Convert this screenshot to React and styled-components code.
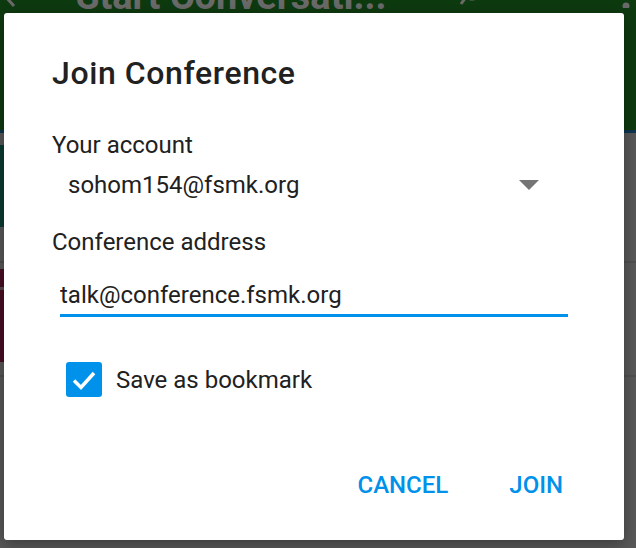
import React, { useState } from "react";
import styled, { createGlobalStyle } from "styled-components";

const GlobalStyle = createGlobalStyle`
  html, body {
    margin: 0;
    padding: 0;
    background: #595959;
    font-family: Roboto, "Noto Sans", sans-serif;
  }
  * { box-sizing: border-box; }
`;

const Screen = styled.div`
  position: relative;
  width: 636px;
  height: 548px;
  overflow: hidden;
  background: #595959;
`;

const Toolbar = styled.div`
  display: flow-root;
  height: 133px;
  background: #0e3a10;
  border-bottom: 3px solid #0c3550;
`;

const ToolbarRow = styled.div`
  display: flex;
  align-items: center;
  height: 40px;
  margin-top: -24px;
  padding: 0 6px 0 2px;
  color: #6a6a6a;
`;

const ToolbarTitle = styled.div`
  flex: 1;
  margin-left: 60px;
  font-size: 38px;
  font-weight: 700;
  line-height: 40px;
  white-space: nowrap;
`;

const ToolbarIcon = styled.svg`
  flex: none;
  margin-left: ${(p) => p.$gap || 0}px;
`;

const ListRow = styled.div`
  height: ${(p) => p.$h}px;
  padding-top: ${(p) => p.$pad}px;
  border-bottom: 2px solid #4f4f4f;
`;

const Avatar = styled.div`
  width: 80px;
  height: ${(p) => p.$h}px;
  background: ${(p) => p.$color};
  border-top: ${(p) => (p.$band ? "18px solid #4a0d25" : "none")};
  box-shadow: ${(p) => (p.$band ? "inset 0 3px 0 #5a4a50" : "none")};
`;

const Dialog = styled.div`
  position: absolute;
  left: 4px;
  top: 13px;
  width: 620px;
  height: 527px;
  background: #ffffff;
  border-radius: 3px;
  box-shadow: 0 4px 16px rgba(0, 0, 0, 0.35);
  padding: 40px 56px 0 48px;
  display: flex;
  flex-direction: column;
`;

const Title = styled.h2`
  margin: 0;
  font-size: 32px;
  font-weight: 500;
  line-height: 40px;
  letter-spacing: 0.6px;
  color: #212121;
`;

const Label = styled.div`
  margin-top: ${(p) => p.$top}px;
  font-size: 24px;
  line-height: 32px;
  color: #212121;
`;

const Select = styled.div`
  display: flex;
  align-items: center;
  justify-content: space-between;
  margin-top: 8px;
  padding: 0 29px 0 16px;
  font-size: 24px;
  line-height: 32px;
  color: #212121;
`;

const Caret = styled.span`
  width: 0;
  height: 0;
  border-left: 10px solid transparent;
  border-right: 10px solid transparent;
  border-top: 10px solid #757575;
`;

const Input = styled.input`
  display: block;
  margin: 21px 0 0 8px;
  width: calc(100% - 8px);
  padding: 0 0 3px 0;
  border: none;
  border-bottom: 3px solid #0091ea;
  outline: none;
  font-family: inherit;
  font-size: 24px;
  line-height: 32px;
  height: 38px;
  color: #212121;
  background: transparent;
`;

const CheckRow = styled.label`
  display: flex;
  align-items: center;
  gap: 14px;
  margin: 45px 0 0 14px;
  font-size: 24px;
  line-height: 32px;
  color: #212121;
  cursor: pointer;
`;

const Box = styled.span`
  display: flex;
  align-items: center;
  justify-content: center;
  width: 36px;
  height: 35px;
  border-radius: 3px;
  background: ${(p) => (p.$on ? "#0091ea" : "transparent")};
  border: ${(p) => (p.$on ? "none" : "3px solid #757575")};
`;

const Actions = styled.div`
  display: flex;
  justify-content: flex-end;
  gap: 61px;
  margin: 72px 5px 0 0;
`;

const TextButton = styled.button`
  padding: 0;
  border: none;
  background: none;
  font-family: inherit;
  font-size: 24px;
  font-weight: 500;
  line-height: 32px;
  color: #0091ea;
  letter-spacing: 0;
  cursor: pointer;
`;

export default function App() {
  const [address, setAddress] = useState("talk@conference.fsmk.org");
  const [bookmark, setBookmark] = useState(true);

  return (
    <Screen>
      <GlobalStyle />
      <Toolbar>
        <ToolbarRow>
          <ToolbarIcon width="14" height="24" viewBox="0 0 14 24">
            <path d="M12 2 L3 12 L12 22" stroke="#6a6a6a" strokeWidth="3" fill="none" />
          </ToolbarIcon>
          <ToolbarTitle>Start Conversati...</ToolbarTitle>
          <ToolbarIcon width="24" height="30" viewBox="0 0 24 30">
            <circle cx="14" cy="10" r="8" stroke="#6a6a6a" strokeWidth="3" fill="none" />
            <path d="M8 16 L3 23" stroke="#6a6a6a" strokeWidth="3" />
          </ToolbarIcon>
          <ToolbarIcon width="8" height="24" viewBox="0 0 8 24" $gap={140}>
            <circle cx="4" cy="22" r="3.5" fill="#6a6a6a" />
          </ToolbarIcon>
        </ToolbarRow>
      </Toolbar>
      <ListRow $h={130} $pad={12}>
        <Avatar $h={82} $color="#0b3b33" />
      </ListRow>
      <ListRow $h={114} $pad={6}>
        <Avatar $h={93} $color="#4a0d25" $band />
      </ListRow>

      <Dialog>
        <Title>Join Conference</Title>
        <Label $top={36}>Your account</Label>
        <Select>
          <span>sohom154@fsmk.org</span>
          <Caret />
        </Select>
        <Label $top={25}>Conference address</Label>
        <Input value={address} onChange={(e) => setAddress(e.target.value)} />
        <CheckRow onClick={() => setBookmark(!bookmark)}>
          <Box $on={bookmark}>
            {bookmark && (
              <svg width="28" height="28" viewBox="0 0 28 28">
                <path d="M4 14.5 L11 21.5 L24 7" stroke="#ffffff" strokeWidth="3.5" fill="none" />
              </svg>
            )}
          </Box>
          Save as bookmark
        </CheckRow>
        <Actions>
          <TextButton>CANCEL</TextButton>
          <TextButton>JOIN</TextButton>
        </Actions>
      </Dialog>
    </Screen>
  );
}
